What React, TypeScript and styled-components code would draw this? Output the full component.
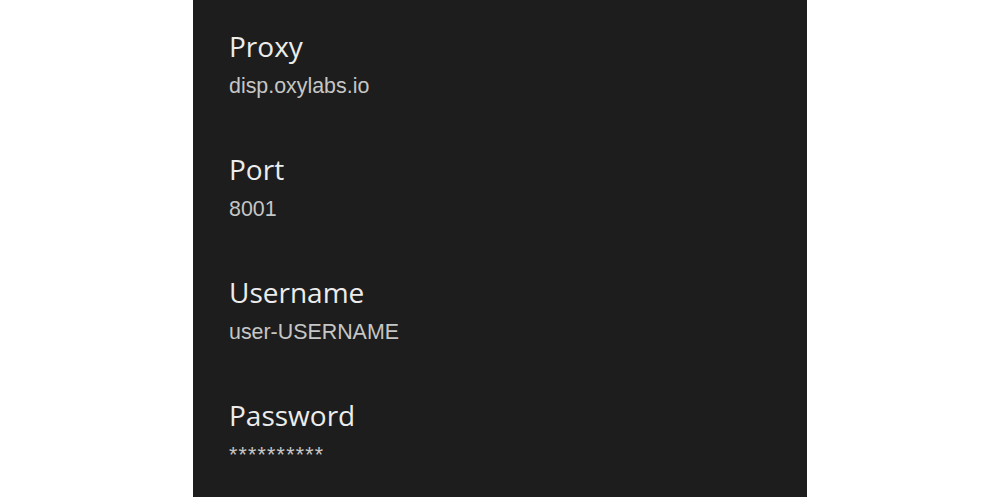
import React from 'react';
import styled, { createGlobalStyle } from 'styled-components';

const GlobalStyle = createGlobalStyle`
  html, body {
    margin: 0;
    padding: 0;
    background: #ffffff;
  }

  #root {
    height: 100vh;
  }
`;

type ProxyField = {
  label: string;
  value: string;
  masked?: boolean;
};

const fields: ProxyField[] = [
  { label: 'Proxy', value: 'disp.oxylabs.io' },
  { label: 'Port', value: '8001' },
  { label: 'Username', value: 'user-USERNAME' },
  { label: 'Password', value: '**********', masked: true },
];

export default function App() {
  return (
    <>
      <GlobalStyle />
      <Panel>
        {fields.map((field) => (
          <Field key={field.label}>
            <Label>{field.label}</Label>
            <Value $masked={field.masked}>{field.value}</Value>
          </Field>
        ))}
      </Panel>
    </>
  );
}

const Panel = styled.section`
  box-sizing: border-box;
  width: 614px;
  height: 100vh;
  margin: 0 auto;
  padding: 30px 36px 0;
  background: #1c1d1c;
  display: flex;
  flex-direction: column;
  gap: 55.5px;
  overflow: hidden;
`;

const Field = styled.div`
  display: flex;
  flex-direction: column;
  gap: 11.5px;
`;

const Label = styled.div`
  font-family: 'Open Sans', Roboto, sans-serif;
  font-size: 28px;
  line-height: 32px;
  color: #ececec;
`;

const Value = styled.div<{ $masked?: boolean }>`
  font-family: 'Liberation Sans', Arial, sans-serif;
  font-size: 21.4px;
  line-height: 24px;
  color: #c6c6c6;
  letter-spacing: ${(p) => (p.$masked ? '1.2px' : '0')};
`;
